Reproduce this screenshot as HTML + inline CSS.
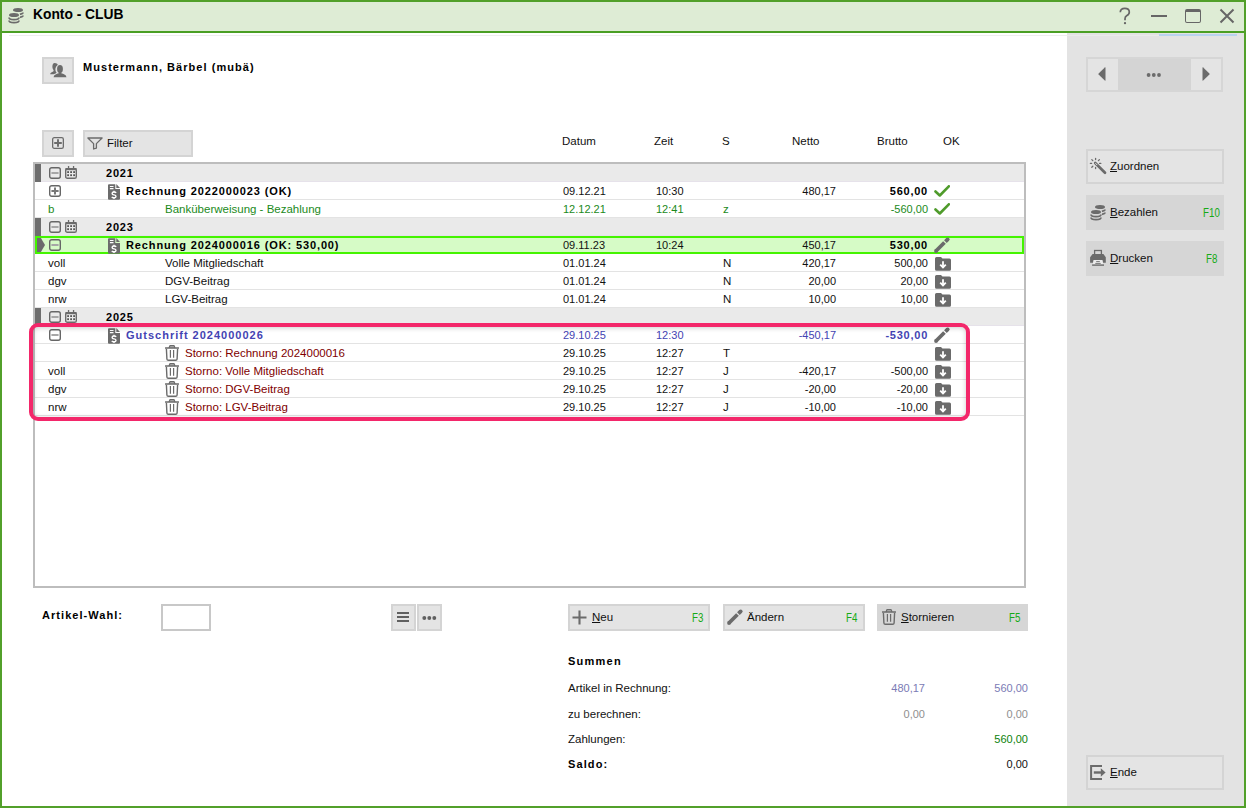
<!DOCTYPE html>
<html><head><meta charset="utf-8"><title>Konto - CLUB</title>
<style>
*{box-sizing:border-box;margin:0;padding:0}
html,body{width:1246px;height:808px;overflow:hidden;background:#fff}
body{position:relative;font-family:"Liberation Sans",sans-serif;font-size:11.5px;color:#111}
.a{position:absolute}
.t{position:absolute;white-space:nowrap;line-height:18px}
.b{font-weight:bold;letter-spacing:0.45px}
.btn{position:absolute;background:#e4e4e4;border:2px solid #d4d4d4}
.btnf{position:absolute;background:#d6d6d6}
.fk{position:absolute;color:#16aa16;white-space:nowrap;line-height:18px;font-size:12.2px;transform:scaleX(.8);transform-origin:0 0}
.rt{position:absolute;white-space:nowrap;line-height:18px;text-align:right;width:120px}
.u{text-decoration:underline;text-underline-offset:1px}
</style></head><body>
<div class="a" style="left:0;top:0;width:1246px;height:808px;border:2px solid #52a02a"></div>
<div class="a" style="left:2px;top:2px;width:1242px;height:29px;background:#deecd5"></div>
<div class="a" style="left:2px;top:31px;width:1242px;height:2px;background:#4a9f24"></div>
<div class="a" style="left:9px;top:35px;width:1058px;height:1px;background:#eeeeee"></div>
<div class="a" style="left:1067px;top:33px;width:177px;height:773px;background:#e3e3e3"></div>
<div class="a" style="left:1067px;top:35px;width:92px;height:1px;background:#eaeaea"></div>
<div class="a" style="left:1159px;top:34px;width:78px;height:2px;background:#b9d3ef"></div>
<svg class="a" style="left:8px;top:7px" width="16" height="17" viewBox="0 0 16 17"><ellipse cx="10" cy="3" rx="5" ry="2" fill="#6b6b6b"/><path d="M11.5 7.3 Q15 7 15 5.5 M11.5 10.3 Q15 10 15 8.5" fill="none" stroke="#6b6b6b" stroke-width="1.7"/><path d="M0.6 8 Q0.6 5.4 6 5.4 Q11.4 5.4 11.4 8 V13.8 Q11.4 16.4 6 16.4 Q0.6 16.4 .6 13.8Z" fill="#deecd5" stroke="#deecd5" stroke-width="1.2"/><ellipse cx="6" cy="8" rx="5" ry="2" fill="#6b6b6b"/><path d="M1 10.5 Q1 12.6 6 12.6 Q11 12.6 11 10.5 M1 13.5 Q1 15.6 6 15.6 Q11 15.6 11 13.5" fill="none" stroke="#6b6b6b" stroke-width="1.7"/></svg>
<div class="t" style="left:33px;top:5px;font-size:13.8px;font-weight:bold;color:#000;line-height:20px">Konto - CLUB</div>
<svg class="a" style="left:1118px;top:7px" width="14" height="18" viewBox="0 0 14 18"><path d="M2.3 5.2 Q2.3 1.3 6.8 1.3 Q11.3 1.3 11.3 5 Q11.3 7.4 8.6 8.8 Q7 9.7 7 11.8 V13.2" fill="none" stroke="#666" stroke-width="1.7"/><circle cx="7" cy="16.2" r="1.15" fill="#666"/></svg>
<div class="a" style="left:1151px;top:15px;width:16px;height:2px;background:#666"></div>
<div class="a" style="left:1185px;top:9px;width:16px;height:14px;border:1.5px solid #666;border-top:3px solid #666;border-radius:2px"></div>
<svg class="a" style="left:1219px;top:8px" width="16" height="16" viewBox="0 0 16 16"><path d="M1.5 1.5 L14.5 14.5 M14.5 1.5 L1.5 14.5" stroke="#666" stroke-width="2"/></svg>
<div class="btn" style="left:42px;top:57px;width:32px;height:27px"></div>
<svg class="a" style="left:49px;top:62px" width="18" height="16" viewBox="0 0 18 16"><path fill="#6b6b6b" d="M5.6 0.9 C7.6 0.9 9.2 1.8 8.7 3.3 C7.1 4.2 6.2 5.9 6.4 8 C6.5 9.2 7 9.8 7.6 10.3 C7.2 11 6.9 11.6 6.6 12.3 L1.2 12.3 C1.3 11 2.3 10.2 3.7 9.8 C4.6 9.5 4.8 9 4.5 8.1 C3.7 7 3.3 5.6 3.4 3.9 C3.6 2 4.4 0.9 5.6 0.9Z"/>
<g fill="#e4e4e4" stroke="#e4e4e4" stroke-width="1.8"><ellipse cx="11" cy="7" rx="2.9" ry="3.9"/><rect x="9.8" y="9.5" width="2.4" height="2.5"/><path d="M4.5 15.2 Q4.7 12.8 7.5 12 L9.5 11.2 Q11 11.6 12.5 11.2 L14.5 12 Q17.3 12.8 17.5 15.2Z"/></g><g fill="#6b6b6b"><ellipse cx="11" cy="7" rx="2.9" ry="3.9"/><rect x="9.8" y="9.5" width="2.4" height="2.5"/><path d="M4.5 15.2 Q4.7 12.8 7.5 12 L9.5 11.2 Q11 11.6 12.5 11.2 L14.5 12 Q17.3 12.8 17.5 15.2Z"/></g></svg>
<div class="t b" style="left:83px;top:58px;font-size:11px;color:#000;letter-spacing:1.05px">Mustermann, Bärbel (mubä)</div>
<div class="btn" style="left:42px;top:130px;width:32px;height:27px"></div>
<svg class="a" style="left:52px;top:137px" width="12" height="12" viewBox="0 0 12 12"><rect x="0.65" y="0.65" width="10.7" height="10.7" rx="1.6" fill="none" stroke="#6b6b6b" stroke-width="1.3"/><path d="M6 2.2v7.6M2.2 6h7.6" stroke="#6b6b6b" stroke-width="1.9"/></svg>
<div class="btn" style="left:83px;top:130px;width:110px;height:27px"></div>
<svg class="a" style="left:87px;top:137px" width="16" height="13" viewBox="0 0 16 13"><path d="M0.9 1 H15.1 L9.4 6.6 V11.1 L6.6 12 V6.6 Z" fill="none" stroke="#6b6b6b" stroke-width="1.3" stroke-linejoin="round"/></svg>
<div class="t" style="left:107px;top:134px;">Filter</div>
<div class="t" style="left:562px;top:132px;">Datum</div>
<div class="t" style="left:654px;top:132px;">Zeit</div>
<div class="t" style="left:722px;top:132px;">S</div>
<div class="t" style="left:792px;top:132px;">Netto</div>
<div class="t" style="left:877px;top:132px;">Brutto</div>
<div class="t" style="left:943px;top:132px;">OK</div>
<div class="a" style="left:33px;top:162px;width:993px;height:426px;border:2px solid #bdbdbd"></div>
<div class="a" style="left:35px;top:164px;width:989px;height:17px;background:#eaeaea"></div>
<div class="a" style="left:35px;top:181px;width:989px;height:1px;background:#e6e2ea"></div>
<div class="a" style="left:35px;top:164px;width:6px;height:18px;background:#6d6d6d"></div>
<svg class="a" style="left:49px;top:167px" width="12" height="12" viewBox="0 0 12 12"><rect x="0.7" y="0.7" width="10.6" height="10.6" rx="2" fill="none" stroke="#666" stroke-width="1.4"/><path d="M2.4 6h7.2" stroke="#a6a6a6" stroke-width="2"/></svg>
<svg class="a" style="left:65px;top:166px" width="12" height="13" viewBox="0 0 12 13"><rect x="0.7" y="2.7" width="10.6" height="9.6" rx="1.6" fill="none" stroke="#6b6b6b" stroke-width="1.4"/><rect x="0.5" y="2" width="11" height="2.2" fill="#6b6b6b"/><rect x="2.9" y="0" width="1.3" height="3" fill="#6b6b6b"/><rect x="7.9" y="0" width="1.3" height="3" fill="#6b6b6b"/><rect x="2.2" y="5.2" width="1.8" height="1.8" fill="#555"/><rect x="5.2" y="5.2" width="1.8" height="1.8" fill="#555"/><rect x="8.2" y="5.2" width="1.8" height="1.8" fill="#555"/><rect x="2.2" y="8.3" width="1.8" height="1.8" fill="#555"/><rect x="5.2" y="8.3" width="1.8" height="1.8" fill="#555"/><rect x="8.2" y="8.3" width="1.8" height="1.8" fill="#555"/></svg>
<div class="t b" style="left:106px;top:164px;font-size:11px;color:#000;letter-spacing:0.8px">2021</div>
<div class="a" style="left:35px;top:199px;width:989px;height:1px;background:#e3e3e3"></div>
<svg class="a" style="left:49px;top:185px" width="12" height="12" viewBox="0 0 12 12"><rect x="0.7" y="0.7" width="10.6" height="10.6" rx="2" fill="none" stroke="#666" stroke-width="1.4"/><path d="M2.4 6h7.2" stroke="#777" stroke-width="2"/><path d="M6 2.4v7.2" stroke="#777" stroke-width="2"/></svg>
<svg class="a" style="left:108px;top:184px" width="12" height="16" viewBox="0 0 12 16"><path d="M1 0.3 H7.3 V4.9 H12 V14.8 Q12 15.8 11 15.8 H1 Q0 15.8 0 14.8 V1.3 Q0 .3 1 .3Z" fill="#6b6b6b"/><path d="M8.3 0 L12 3.9 H8.3Z" fill="#6b6b6b"/><path d="M1.9 2.5h3.6M1.9 4.6h3.6" stroke="#fff" stroke-width="1.1"/><path d="M8.1 8.9 Q7.6 8 6 8 Q4.1 8 4.1 9.4 Q4.1 10.6 6 10.9 Q8 11.2 8 12.5 Q8 13.8 6 13.8 Q4.4 13.8 3.8 12.8" fill="none" stroke="#fff" stroke-width="1.4"/><path d="M6 6.8V8.3M6 13.5V15" stroke="#fff" stroke-width="1.3"/></svg>
<div class="t b" style="left:126px;top:182px;font-size:11px;letter-spacing:0.88px;color:#000">Rechnung 2022000023 (OK)</div>
<div class="t" style="left:563px;top:182px;font-size:11px;color:#111">09.12.21</div>
<div class="t" style="left:656px;top:182px;font-size:11px;color:#111">10:30</div>
<div class="rt" style="left:716px;top:182px;font-size:11px;color:#111">480,17</div>
<div class="rt" style="left:808px;top:182px;font-size:11px;font-weight:bold;letter-spacing:0.75px;color:#000">560,00</div>
<svg class="a" style="left:934px;top:185px" width="16" height="12" viewBox="0 0 16 12"><path d="M1.5 6.5 L5.8 10.5 L14.8 1.3" fill="none" stroke="#4f9b2b" stroke-width="2.6" stroke-linecap="round" stroke-linejoin="round"/></svg>
<div class="a" style="left:35px;top:217px;width:989px;height:1px;background:#e3e3e3"></div>
<div class="t" style="left:48px;top:200px;color:#1b8a1b">b</div>
<div class="t" style="left:165px;top:200px;color:#1b8a1b">Banküberweisung - Bezahlung</div>
<div class="t" style="left:563px;top:200px;font-size:11px;color:#1b8a1b">12.12.21</div>
<div class="t" style="left:656px;top:200px;font-size:11px;color:#1b8a1b">12:41</div>
<div class="t" style="left:723px;top:200px;color:#1b8a1b">z</div>
<div class="rt" style="left:808px;top:200px;font-size:11px;color:#1b8a1b">-560,00</div>
<svg class="a" style="left:934px;top:203px" width="16" height="12" viewBox="0 0 16 12"><path d="M1.5 6.5 L5.8 10.5 L14.8 1.3" fill="none" stroke="#4f9b2b" stroke-width="2.6" stroke-linecap="round" stroke-linejoin="round"/></svg>
<div class="a" style="left:35px;top:218px;width:989px;height:17px;background:#eaeaea"></div>
<div class="a" style="left:35px;top:235px;width:989px;height:1px;background:#e6e2ea"></div>
<div class="a" style="left:35px;top:218px;width:6px;height:18px;background:#6d6d6d"></div>
<svg class="a" style="left:49px;top:221px" width="12" height="12" viewBox="0 0 12 12"><rect x="0.7" y="0.7" width="10.6" height="10.6" rx="2" fill="none" stroke="#666" stroke-width="1.4"/><path d="M2.4 6h7.2" stroke="#a6a6a6" stroke-width="2"/></svg>
<svg class="a" style="left:65px;top:220px" width="12" height="13" viewBox="0 0 12 13"><rect x="0.7" y="2.7" width="10.6" height="9.6" rx="1.6" fill="none" stroke="#6b6b6b" stroke-width="1.4"/><rect x="0.5" y="2" width="11" height="2.2" fill="#6b6b6b"/><rect x="2.9" y="0" width="1.3" height="3" fill="#6b6b6b"/><rect x="7.9" y="0" width="1.3" height="3" fill="#6b6b6b"/><rect x="2.2" y="5.2" width="1.8" height="1.8" fill="#555"/><rect x="5.2" y="5.2" width="1.8" height="1.8" fill="#555"/><rect x="8.2" y="5.2" width="1.8" height="1.8" fill="#555"/><rect x="2.2" y="8.3" width="1.8" height="1.8" fill="#555"/><rect x="5.2" y="8.3" width="1.8" height="1.8" fill="#555"/><rect x="8.2" y="8.3" width="1.8" height="1.8" fill="#555"/></svg>
<div class="t b" style="left:106px;top:218px;font-size:11px;color:#000;letter-spacing:0.8px">2023</div>
<div class="a" style="left:35px;top:253px;width:989px;height:1px;background:#e3e3e3"></div>
<div class="a" style="left:35px;top:236px;width:989px;height:18px;background:#d6fbc6;border:2px solid #44f400"></div>
<svg class="a" style="left:37px;top:238px" width="8" height="14" viewBox="0 0 8 14"><path d="M0 0 H3.9 L8 7 L3.9 14 H0Z" fill="#6b6b6b"/></svg>
<svg class="a" style="left:49px;top:239px" width="12" height="12" viewBox="0 0 12 12"><rect x="0.7" y="0.7" width="10.6" height="10.6" rx="2" fill="none" stroke="#666" stroke-width="1.4"/><path d="M2.4 6h7.2" stroke="#a6a6a6" stroke-width="2"/></svg>
<svg class="a" style="left:108px;top:238px" width="12" height="16" viewBox="0 0 12 16"><path d="M1 0.3 H7.3 V4.9 H12 V14.8 Q12 15.8 11 15.8 H1 Q0 15.8 0 14.8 V1.3 Q0 .3 1 .3Z" fill="#6b6b6b"/><path d="M8.3 0 L12 3.9 H8.3Z" fill="#6b6b6b"/><path d="M1.9 2.5h3.6M1.9 4.6h3.6" stroke="#fff" stroke-width="1.1"/><path d="M8.1 8.9 Q7.6 8 6 8 Q4.1 8 4.1 9.4 Q4.1 10.6 6 10.9 Q8 11.2 8 12.5 Q8 13.8 6 13.8 Q4.4 13.8 3.8 12.8" fill="none" stroke="#fff" stroke-width="1.4"/><path d="M6 6.8V8.3M6 13.5V15" stroke="#fff" stroke-width="1.3"/></svg>
<div class="t b" style="left:126px;top:236px;font-size:11px;letter-spacing:0.88px;color:#000">Rechnung 2024000016 (OK: 530,00)</div>
<div class="t" style="left:563px;top:236px;font-size:11px;color:#111">09.11.23</div>
<div class="t" style="left:656px;top:236px;font-size:11px;color:#111">10:24</div>
<div class="rt" style="left:716px;top:236px;font-size:11px;color:#111">450,17</div>
<div class="rt" style="left:808px;top:236px;font-size:11px;font-weight:bold;letter-spacing:0.75px;color:#000">530,00</div>
<svg class="a" style="left:934px;top:237px" width="16" height="16" viewBox="0 0 16 16"><g fill="#6b6b6b"><path d="M0.66 12.66 L9.14 4.18 L11.82 6.86 L3.34 15.34Z"/><circle cx="2" cy="14" r="1.9"/><path d="M10.06 3.26 L12.33 0.99 L15.01 3.67 L12.74 5.94Z"/><circle cx="13.67" cy="2.33" r="1.9"/></g></svg>
<div class="a" style="left:35px;top:271px;width:989px;height:1px;background:#e3e3e3"></div>
<div class="t" style="left:48px;top:254px;color:#111">voll</div>
<div class="t" style="left:165px;top:254px;color:#111">Volle Mitgliedschaft</div>
<div class="t" style="left:563px;top:254px;font-size:11px;color:#111">01.01.24</div>
<div class="t" style="left:723px;top:254px;color:#111">N</div>
<div class="rt" style="left:716px;top:254px;font-size:11px;color:#111">420,17</div>
<div class="rt" style="left:808px;top:254px;font-size:11px;color:#111">500,00</div>
<svg class="a" style="left:935px;top:257px" width="16" height="14" viewBox="0 0 16 14"><path d="M0 1.5 Q0 0 1.5 0 H6 L7.5 1.6 H14.5 Q16 1.6 16 3.1 V12.2 Q16 13.7 14.5 13.7 H1.5 Q0 13.7 0 12.2Z" fill="#6b6b6b"/><path d="M8 4.3 V10" stroke="#fff" stroke-width="1.8"/><path d="M5.2 7.6 L8 10.5 L10.8 7.6" fill="none" stroke="#fff" stroke-width="1.8"/></svg>
<div class="a" style="left:35px;top:289px;width:989px;height:1px;background:#e3e3e3"></div>
<div class="t" style="left:48px;top:272px;color:#111">dgv</div>
<div class="t" style="left:165px;top:272px;color:#111">DGV-Beitrag</div>
<div class="t" style="left:563px;top:272px;font-size:11px;color:#111">01.01.24</div>
<div class="t" style="left:723px;top:272px;color:#111">N</div>
<div class="rt" style="left:716px;top:272px;font-size:11px;color:#111">20,00</div>
<div class="rt" style="left:808px;top:272px;font-size:11px;color:#111">20,00</div>
<svg class="a" style="left:935px;top:275px" width="16" height="14" viewBox="0 0 16 14"><path d="M0 1.5 Q0 0 1.5 0 H6 L7.5 1.6 H14.5 Q16 1.6 16 3.1 V12.2 Q16 13.7 14.5 13.7 H1.5 Q0 13.7 0 12.2Z" fill="#6b6b6b"/><path d="M8 4.3 V10" stroke="#fff" stroke-width="1.8"/><path d="M5.2 7.6 L8 10.5 L10.8 7.6" fill="none" stroke="#fff" stroke-width="1.8"/></svg>
<div class="a" style="left:35px;top:307px;width:989px;height:1px;background:#e3e3e3"></div>
<div class="t" style="left:48px;top:290px;color:#111">nrw</div>
<div class="t" style="left:165px;top:290px;color:#111">LGV-Beitrag</div>
<div class="t" style="left:563px;top:290px;font-size:11px;color:#111">01.01.24</div>
<div class="t" style="left:723px;top:290px;color:#111">N</div>
<div class="rt" style="left:716px;top:290px;font-size:11px;color:#111">10,00</div>
<div class="rt" style="left:808px;top:290px;font-size:11px;color:#111">10,00</div>
<svg class="a" style="left:935px;top:293px" width="16" height="14" viewBox="0 0 16 14"><path d="M0 1.5 Q0 0 1.5 0 H6 L7.5 1.6 H14.5 Q16 1.6 16 3.1 V12.2 Q16 13.7 14.5 13.7 H1.5 Q0 13.7 0 12.2Z" fill="#6b6b6b"/><path d="M8 4.3 V10" stroke="#fff" stroke-width="1.8"/><path d="M5.2 7.6 L8 10.5 L10.8 7.6" fill="none" stroke="#fff" stroke-width="1.8"/></svg>
<div class="a" style="left:35px;top:308px;width:989px;height:17px;background:#eaeaea"></div>
<div class="a" style="left:35px;top:325px;width:989px;height:1px;background:#e6e2ea"></div>
<div class="a" style="left:35px;top:308px;width:6px;height:18px;background:#6d6d6d"></div>
<svg class="a" style="left:49px;top:311px" width="12" height="12" viewBox="0 0 12 12"><rect x="0.7" y="0.7" width="10.6" height="10.6" rx="2" fill="none" stroke="#666" stroke-width="1.4"/><path d="M2.4 6h7.2" stroke="#a6a6a6" stroke-width="2"/></svg>
<svg class="a" style="left:65px;top:310px" width="12" height="13" viewBox="0 0 12 13"><rect x="0.7" y="2.7" width="10.6" height="9.6" rx="1.6" fill="none" stroke="#6b6b6b" stroke-width="1.4"/><rect x="0.5" y="2" width="11" height="2.2" fill="#6b6b6b"/><rect x="2.9" y="0" width="1.3" height="3" fill="#6b6b6b"/><rect x="7.9" y="0" width="1.3" height="3" fill="#6b6b6b"/><rect x="2.2" y="5.2" width="1.8" height="1.8" fill="#555"/><rect x="5.2" y="5.2" width="1.8" height="1.8" fill="#555"/><rect x="8.2" y="5.2" width="1.8" height="1.8" fill="#555"/><rect x="2.2" y="8.3" width="1.8" height="1.8" fill="#555"/><rect x="5.2" y="8.3" width="1.8" height="1.8" fill="#555"/><rect x="8.2" y="8.3" width="1.8" height="1.8" fill="#555"/></svg>
<div class="t b" style="left:106px;top:308px;font-size:11px;color:#000;letter-spacing:0.8px">2025</div>
<div class="a" style="left:35px;top:343px;width:989px;height:1px;background:#e3e3e3"></div>
<svg class="a" style="left:49px;top:329px" width="12" height="12" viewBox="0 0 12 12"><rect x="0.7" y="0.7" width="10.6" height="10.6" rx="2" fill="none" stroke="#666" stroke-width="1.4"/><path d="M2.4 6h7.2" stroke="#a6a6a6" stroke-width="2"/></svg>
<svg class="a" style="left:108px;top:328px" width="12" height="16" viewBox="0 0 12 16"><path d="M1 0.3 H7.3 V4.9 H12 V14.8 Q12 15.8 11 15.8 H1 Q0 15.8 0 14.8 V1.3 Q0 .3 1 .3Z" fill="#6b6b6b"/><path d="M8.3 0 L12 3.9 H8.3Z" fill="#6b6b6b"/><path d="M1.9 2.5h3.6M1.9 4.6h3.6" stroke="#fff" stroke-width="1.1"/><path d="M8.1 8.9 Q7.6 8 6 8 Q4.1 8 4.1 9.4 Q4.1 10.6 6 10.9 Q8 11.2 8 12.5 Q8 13.8 6 13.8 Q4.4 13.8 3.8 12.8" fill="none" stroke="#fff" stroke-width="1.4"/><path d="M6 6.8V8.3M6 13.5V15" stroke="#fff" stroke-width="1.3"/></svg>
<div class="t b" style="left:126px;top:326px;font-size:11px;letter-spacing:1.0px;color:#4343b3">Gutschrift 2024000026</div>
<div class="t" style="left:563px;top:326px;font-size:11px;color:#4343b3">29.10.25</div>
<div class="t" style="left:656px;top:326px;font-size:11px;color:#4343b3">12:30</div>
<div class="rt" style="left:716px;top:326px;font-size:11px;color:#4343b3">-450,17</div>
<div class="rt" style="left:808px;top:326px;font-size:11px;font-weight:bold;letter-spacing:0.75px;color:#4343b3">-530,00</div>
<svg class="a" style="left:934px;top:327px" width="16" height="16" viewBox="0 0 16 16"><g fill="#6b6b6b"><path d="M0.66 12.66 L9.14 4.18 L11.82 6.86 L3.34 15.34Z"/><circle cx="2" cy="14" r="1.9"/><path d="M10.06 3.26 L12.33 0.99 L15.01 3.67 L12.74 5.94Z"/><circle cx="13.67" cy="2.33" r="1.9"/></g></svg>
<div class="a" style="left:35px;top:361px;width:989px;height:1px;background:#e3e3e3"></div>
<svg class="a" style="left:165px;top:345px" width="14" height="16" viewBox="0 0 14 16"><path d="M4 2.9 L4.9 0.7 H9.1 L10 2.9" fill="#b4b4b4" stroke="#6b6b6b" stroke-width="1.2" stroke-linejoin="round"/><path d="M0.3 3.1 H13.7" stroke="#6b6b6b" stroke-width="1.5" stroke-linecap="round"/><path d="M1.4 3.8 L1.9 14 Q2 15.3 3.3 15.3 H10.7 Q12 15.3 12.1 14 L12.6 3.8" fill="none" stroke="#6b6b6b" stroke-width="1.4"/><path d="M5.4 5.1V12.8M8.6 5.1V12.8" stroke="#6b6b6b" stroke-width="1.2"/></svg>
<div class="t" style="left:185px;top:344px;color:#800000">Storno: Rechnung 2024000016</div>
<div class="t" style="left:563px;top:344px;font-size:11px;color:#111">29.10.25</div>
<div class="t" style="left:656px;top:344px;font-size:11px;color:#111">12:27</div>
<div class="t" style="left:723px;top:344px;color:#111">T</div>
<svg class="a" style="left:935px;top:347px" width="16" height="14" viewBox="0 0 16 14"><path d="M0 1.5 Q0 0 1.5 0 H6 L7.5 1.6 H14.5 Q16 1.6 16 3.1 V12.2 Q16 13.7 14.5 13.7 H1.5 Q0 13.7 0 12.2Z" fill="#6b6b6b"/><path d="M8 4.3 V10" stroke="#fff" stroke-width="1.8"/><path d="M5.2 7.6 L8 10.5 L10.8 7.6" fill="none" stroke="#fff" stroke-width="1.8"/></svg>
<div class="a" style="left:35px;top:379px;width:989px;height:1px;background:#e3e3e3"></div>
<div class="t" style="left:48px;top:362px;">voll</div>
<svg class="a" style="left:165px;top:363px" width="14" height="16" viewBox="0 0 14 16"><path d="M4 2.9 L4.9 0.7 H9.1 L10 2.9" fill="#b4b4b4" stroke="#6b6b6b" stroke-width="1.2" stroke-linejoin="round"/><path d="M0.3 3.1 H13.7" stroke="#6b6b6b" stroke-width="1.5" stroke-linecap="round"/><path d="M1.4 3.8 L1.9 14 Q2 15.3 3.3 15.3 H10.7 Q12 15.3 12.1 14 L12.6 3.8" fill="none" stroke="#6b6b6b" stroke-width="1.4"/><path d="M5.4 5.1V12.8M8.6 5.1V12.8" stroke="#6b6b6b" stroke-width="1.2"/></svg>
<div class="t" style="left:185px;top:362px;color:#800000">Storno: Volle Mitgliedschaft</div>
<div class="t" style="left:563px;top:362px;font-size:11px;color:#111">29.10.25</div>
<div class="t" style="left:656px;top:362px;font-size:11px;color:#111">12:27</div>
<div class="t" style="left:723px;top:362px;color:#111">J</div>
<div class="rt" style="left:716px;top:362px;font-size:11px;color:#111">-420,17</div>
<div class="rt" style="left:808px;top:362px;font-size:11px;color:#111">-500,00</div>
<svg class="a" style="left:935px;top:365px" width="16" height="14" viewBox="0 0 16 14"><path d="M0 1.5 Q0 0 1.5 0 H6 L7.5 1.6 H14.5 Q16 1.6 16 3.1 V12.2 Q16 13.7 14.5 13.7 H1.5 Q0 13.7 0 12.2Z" fill="#6b6b6b"/><path d="M8 4.3 V10" stroke="#fff" stroke-width="1.8"/><path d="M5.2 7.6 L8 10.5 L10.8 7.6" fill="none" stroke="#fff" stroke-width="1.8"/></svg>
<div class="a" style="left:35px;top:397px;width:989px;height:1px;background:#e3e3e3"></div>
<div class="t" style="left:48px;top:380px;">dgv</div>
<svg class="a" style="left:165px;top:381px" width="14" height="16" viewBox="0 0 14 16"><path d="M4 2.9 L4.9 0.7 H9.1 L10 2.9" fill="#b4b4b4" stroke="#6b6b6b" stroke-width="1.2" stroke-linejoin="round"/><path d="M0.3 3.1 H13.7" stroke="#6b6b6b" stroke-width="1.5" stroke-linecap="round"/><path d="M1.4 3.8 L1.9 14 Q2 15.3 3.3 15.3 H10.7 Q12 15.3 12.1 14 L12.6 3.8" fill="none" stroke="#6b6b6b" stroke-width="1.4"/><path d="M5.4 5.1V12.8M8.6 5.1V12.8" stroke="#6b6b6b" stroke-width="1.2"/></svg>
<div class="t" style="left:185px;top:380px;color:#800000">Storno: DGV-Beitrag</div>
<div class="t" style="left:563px;top:380px;font-size:11px;color:#111">29.10.25</div>
<div class="t" style="left:656px;top:380px;font-size:11px;color:#111">12:27</div>
<div class="t" style="left:723px;top:380px;color:#111">J</div>
<div class="rt" style="left:716px;top:380px;font-size:11px;color:#111">-20,00</div>
<div class="rt" style="left:808px;top:380px;font-size:11px;color:#111">-20,00</div>
<svg class="a" style="left:935px;top:383px" width="16" height="14" viewBox="0 0 16 14"><path d="M0 1.5 Q0 0 1.5 0 H6 L7.5 1.6 H14.5 Q16 1.6 16 3.1 V12.2 Q16 13.7 14.5 13.7 H1.5 Q0 13.7 0 12.2Z" fill="#6b6b6b"/><path d="M8 4.3 V10" stroke="#fff" stroke-width="1.8"/><path d="M5.2 7.6 L8 10.5 L10.8 7.6" fill="none" stroke="#fff" stroke-width="1.8"/></svg>
<div class="a" style="left:35px;top:415px;width:989px;height:1px;background:#e3e3e3"></div>
<div class="t" style="left:48px;top:398px;">nrw</div>
<svg class="a" style="left:165px;top:399px" width="14" height="16" viewBox="0 0 14 16"><path d="M4 2.9 L4.9 0.7 H9.1 L10 2.9" fill="#b4b4b4" stroke="#6b6b6b" stroke-width="1.2" stroke-linejoin="round"/><path d="M0.3 3.1 H13.7" stroke="#6b6b6b" stroke-width="1.5" stroke-linecap="round"/><path d="M1.4 3.8 L1.9 14 Q2 15.3 3.3 15.3 H10.7 Q12 15.3 12.1 14 L12.6 3.8" fill="none" stroke="#6b6b6b" stroke-width="1.4"/><path d="M5.4 5.1V12.8M8.6 5.1V12.8" stroke="#6b6b6b" stroke-width="1.2"/></svg>
<div class="t" style="left:185px;top:398px;color:#800000">Storno: LGV-Beitrag</div>
<div class="t" style="left:563px;top:398px;font-size:11px;color:#111">29.10.25</div>
<div class="t" style="left:656px;top:398px;font-size:11px;color:#111">12:27</div>
<div class="t" style="left:723px;top:398px;color:#111">J</div>
<div class="rt" style="left:716px;top:398px;font-size:11px;color:#111">-10,00</div>
<div class="rt" style="left:808px;top:398px;font-size:11px;color:#111">-10,00</div>
<svg class="a" style="left:935px;top:401px" width="16" height="14" viewBox="0 0 16 14"><path d="M0 1.5 Q0 0 1.5 0 H6 L7.5 1.6 H14.5 Q16 1.6 16 3.1 V12.2 Q16 13.7 14.5 13.7 H1.5 Q0 13.7 0 12.2Z" fill="#6b6b6b"/><path d="M8 4.3 V10" stroke="#fff" stroke-width="1.8"/><path d="M5.2 7.6 L8 10.5 L10.8 7.6" fill="none" stroke="#fff" stroke-width="1.8"/></svg>
<div class="a" style="left:29px;top:323px;width:941px;height:98px;border:4px solid #f3276a;border-radius:9px;box-shadow:inset 0 1px 5px rgba(0,0,0,.2)"></div>
<div class="t b" style="left:42px;top:606px;font-size:11px;color:#000;letter-spacing:1.05px">Artikel-Wahl:</div>
<div class="a" style="left:161px;top:604px;width:50px;height:27px;border:2px solid #c8c8c8;background:#fff"></div>
<div class="btn" style="left:391px;top:604px;width:25px;height:27px"></div>
<div class="btn" style="left:417px;top:604px;width:25px;height:27px"></div>
<svg class="a" style="left:397px;top:611px" width="12" height="12" viewBox="0 0 12 12"><path d="M0 2h12M0 6h12M0 10h12" stroke="#606060" stroke-width="1.9" stroke-linecap="round"/></svg>
<svg class="a" style="left:422px;top:615px" width="15" height="6" viewBox="0 0 15 6"><circle cx="2.3" cy="3" r="1.95" fill="#606060"/><circle cx="7.3" cy="3" r="1.95" fill="#606060"/><circle cx="12.3" cy="3" r="1.95" fill="#606060"/></svg>
<div class="btn" style="left:568px;top:604px;width:142px;height:27px"></div>
<svg class="a" style="left:572px;top:610px" width="15" height="15" viewBox="0 0 15 15"><path d="M7.5 0.5v14M0.5 7.5h14" stroke="#6b6b6b" stroke-width="2.1"/></svg>
<div class="t" style="left:592px;top:608px;"><span class="u">N</span>eu</div>
<div class="fk" style="left:692px;top:609px;">F3</div>
<div class="btn" style="left:723px;top:604px;width:142px;height:27px"></div>
<svg class="a" style="left:727px;top:609px" width="16" height="16" viewBox="0 0 16 16"><g fill="#6b6b6b"><path d="M0.66 12.66 L9.14 4.18 L11.82 6.86 L3.34 15.34Z"/><circle cx="2" cy="14" r="1.9"/><path d="M10.06 3.26 L12.33 0.99 L15.01 3.67 L12.74 5.94Z"/><circle cx="13.67" cy="2.33" r="1.9"/></g></svg>
<div class="t" style="left:747px;top:608px;">Ändern</div>
<div class="fk" style="left:846px;top:609px;">F4</div>
<div class="btnf" style="left:877px;top:604px;width:151px;height:27px"></div>
<svg class="a" style="left:882px;top:609px" width="14" height="16" viewBox="0 0 14 16"><path d="M4 2.9 L4.9 0.7 H9.1 L10 2.9" fill="#b4b4b4" stroke="#6b6b6b" stroke-width="1.2" stroke-linejoin="round"/><path d="M0.3 3.1 H13.7" stroke="#6b6b6b" stroke-width="1.5" stroke-linecap="round"/><path d="M1.4 3.8 L1.9 14 Q2 15.3 3.3 15.3 H10.7 Q12 15.3 12.1 14 L12.6 3.8" fill="none" stroke="#6b6b6b" stroke-width="1.4"/><path d="M5.4 5.1V12.8M8.6 5.1V12.8" stroke="#6b6b6b" stroke-width="1.2"/></svg>
<div class="t" style="left:901px;top:608px;"><span class="u">S</span>tornieren</div>
<div class="fk" style="left:1009px;top:609px;">F5</div>
<div class="t b" style="left:568px;top:652px;font-size:11px;color:#000;letter-spacing:1.25px">Summen</div>
<div class="t" style="left:568px;top:679px;">Artikel in Rechnung:</div>
<div class="rt" style="left:805px;top:679px;font-size:11px;color:#7b7bb5">480,17</div>
<div class="rt" style="left:908px;top:679px;font-size:11px;color:#7b7bb5">560,00</div>
<div class="t" style="left:568px;top:705px;">zu berechnen:</div>
<div class="rt" style="left:805px;top:705px;font-size:11px;color:#8f8f8f">0,00</div>
<div class="rt" style="left:908px;top:705px;font-size:11px;color:#8f8f8f">0,00</div>
<div class="t" style="left:568px;top:730px;">Zahlungen:</div>
<div class="rt" style="left:908px;top:730px;font-size:11px;color:#0c820c">560,00</div>
<div class="t b" style="left:568px;top:755px;font-size:11px;color:#000;letter-spacing:1.1px">Saldo:</div>
<div class="rt" style="left:908px;top:755px;font-size:11px;color:#111">0,00</div>
<div class="a" style="left:1086px;top:57px;width:137px;height:35px;border:2px solid #d6d6d6;background:#e4e4e4"></div>
<div class="a" style="left:1118px;top:59px;width:73px;height:31px;background:#d4d4d4"></div>
<svg class="a" style="left:1098px;top:67px" width="8" height="14" viewBox="0 0 8 14"><path d="M7.5 0.8 V13.2 Q7.5 14 6.8 13.4 L0.6 7.6 Q0 7 0.6 6.4 L6.8 0.6 Q7.5 0 7.5 .8Z" fill="#6b6b6b"/></svg>
<svg class="a" style="left:1202px;top:67px" width="8" height="14" viewBox="0 0 8 14"><path d="M0.5 0.8 V13.2 Q0.5 14 1.2 13.4 L7.4 7.6 Q8 7 7.4 6.4 L1.2 0.6 Q0.5 0 0.5 .8Z" fill="#6b6b6b"/></svg>
<svg class="a" style="left:1146px;top:72px" width="16" height="6" viewBox="0 0 16 6"><circle cx="2.6" cy="3" r="1.9" fill="#6b6b6b"/><circle cx="7.8" cy="3" r="1.9" fill="#6b6b6b"/><circle cx="13" cy="3" r="1.9" fill="#6b6b6b"/></svg>
<div class="btn" style="left:1086px;top:149px;width:138px;height:35px"></div>
<svg class="a" style="left:1089px;top:154px" width="18" height="21" viewBox="0 0 18 21"><g stroke="#6b6b6b" stroke-width="1.3" stroke-linecap="round"><path d="M6.6 4.3V5.5M6.6 13.4V14.6M1.4 9.4H2.6M10.6 9.4H11.8M2.8 5.6L3.8 6.6M10.4 5.6L9.4 6.6M2.8 13.2L3.8 12.2"/></g><path d="M6.2 9 L16 18.8" stroke="#6b6b6b" stroke-width="2.7" stroke-linecap="round"/><path d="M6.4 9.2 L8.3 11.1" stroke="#e4e4e4" stroke-width="1"/></svg>
<div class="t" style="left:1110px;top:157px;"><span class="u">Z</span>uordnen</div>
<div class="btnf" style="left:1086px;top:195px;width:138px;height:35px"></div>
<svg class="a" style="left:1090px;top:204px" width="16" height="17" viewBox="0 0 16 17"><ellipse cx="10" cy="3" rx="5" ry="2" fill="#6b6b6b"/><path d="M11.5 7.3 Q15 7 15 5.5 M11.5 10.3 Q15 10 15 8.5" fill="none" stroke="#6b6b6b" stroke-width="1.7"/><path d="M0.6 8 Q0.6 5.4 6 5.4 Q11.4 5.4 11.4 8 V13.8 Q11.4 16.4 6 16.4 Q0.6 16.4 .6 13.8Z" fill="#d6d6d6" stroke="#d6d6d6" stroke-width="1.2"/><ellipse cx="6" cy="8" rx="5" ry="2" fill="#6b6b6b"/><path d="M1 10.5 Q1 12.6 6 12.6 Q11 12.6 11 10.5 M1 13.5 Q1 15.6 6 15.6 Q11 15.6 11 13.5" fill="none" stroke="#6b6b6b" stroke-width="1.7"/></svg>
<div class="t" style="left:1110px;top:203px;"><span class="u">B</span>ezahlen</div>
<div class="fk" style="left:1203px;top:204px;">F10</div>
<div class="btnf" style="left:1086px;top:241px;width:138px;height:35px"></div>
<svg class="a" style="left:1085px;top:244px" width="24" height="24" viewBox="0 0 24 24"><rect x="9.6" y="6.5" width="6.8" height="5" fill="none" stroke="#6b6b6b" stroke-width="1.3"/><path d="M7.6 10.1 H18.4 L20.8 13.2 V18.8 H17.9 L17.3 16 H8.7 L8.1 18.8 H5.1 V13.2Z" fill="#6b6b6b"/><path d="M8.7 16 H17.3 L18.3 20.4 H7.7Z" fill="#ececec"/><path d="M11.2 17.6H14.8M10.3 19.4H15.7" stroke="#6b6b6b" stroke-width="0.9"/><rect x="7.1" y="20.4" width="11.9" height="1.4" fill="#6b6b6b"/></svg>
<div class="t" style="left:1110px;top:249px;"><span class="u">D</span>rucken</div>
<div class="fk" style="left:1206px;top:250px;">F8</div>
<div class="btn" style="left:1086px;top:755px;width:138px;height:35px"></div>
<svg class="a" style="left:1089px;top:764px" width="17" height="17" viewBox="0 0 17 17"><path d="M13 2 H2.1 V15 H13" fill="none" stroke="#6b6b6b" stroke-width="2"/><path d="M4.8 8.5 H12.5" stroke="#6b6b6b" stroke-width="2.4"/><path d="M11.8 4.2 L16.6 8.5 L11.8 12.8Z" fill="#6b6b6b"/></svg>
<div class="t" style="left:1110px;top:763px;"><span class="u">E</span>nde</div>
</body></html>
